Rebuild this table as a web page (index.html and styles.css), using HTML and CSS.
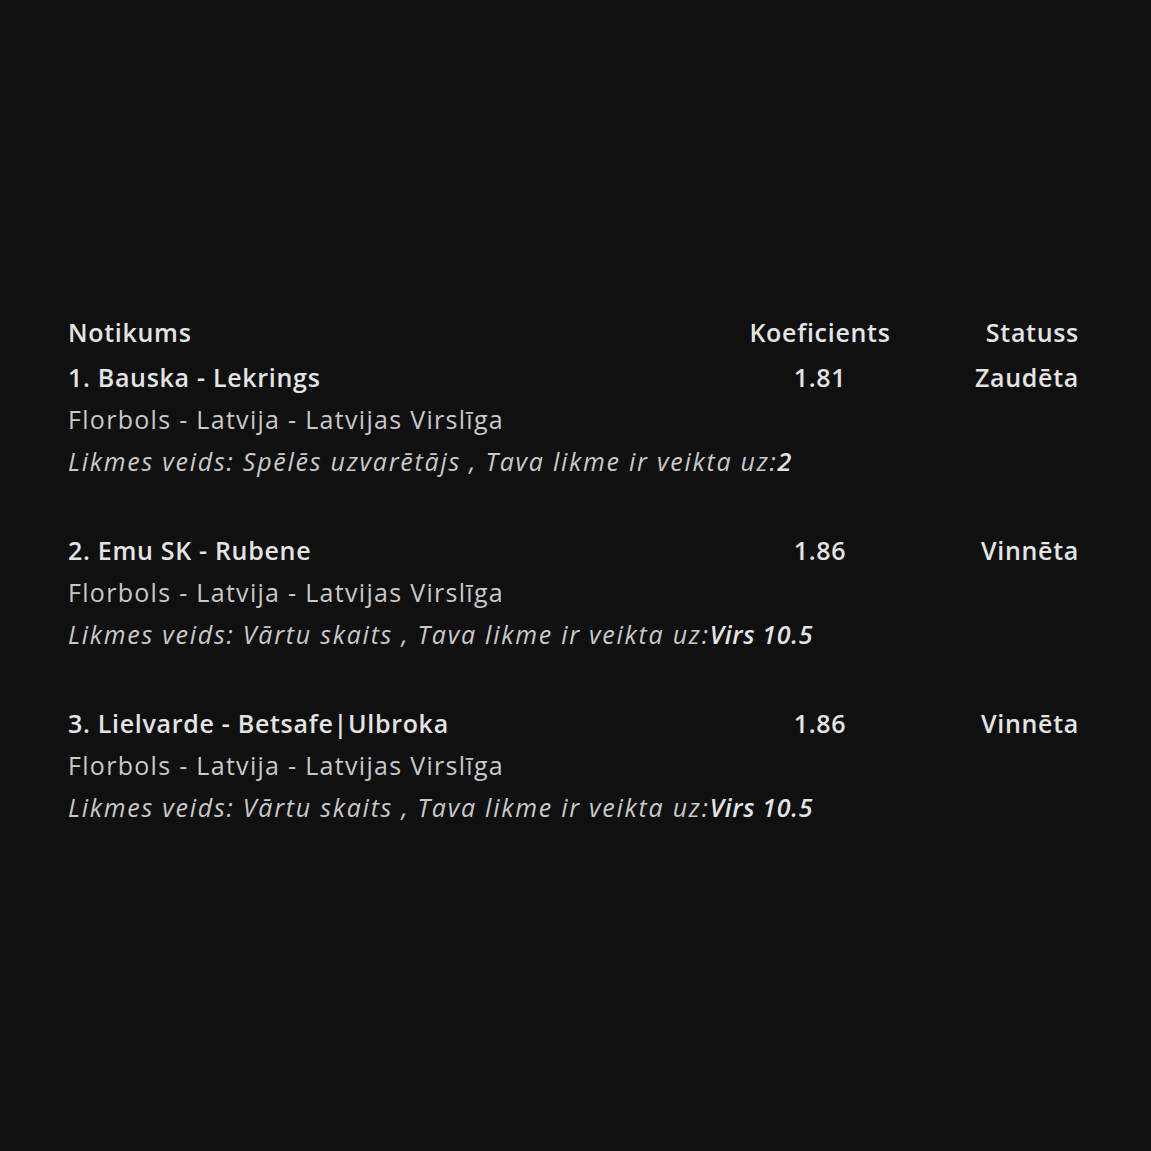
FILE: index.html
```html
<!DOCTYPE html>
<html lang="lv">
<head>
<meta charset="utf-8">
<link rel="stylesheet" href="styles.css">
</head>
<body>
<div class="page">
  <div class="table">
    <div class="row head">
      <div class="c-event">Notikums</div>
      <div class="c-odds">Koeficients</div>
      <div class="c-status">Statuss</div>
    </div>
    <div class="bet">
      <div class="row title">
        <div class="c-event">1. Bauska - Lekrings</div>
        <div class="c-odds">1.81</div>
        <div class="c-status">Zaudēta</div>
      </div>
      <div class="sub">Florbols - Latvija - Latvijas Virslīga</div>
      <div class="type">Likmes veids: Spēlēs uzvarētājs , Tava likme ir veikta uz:<b>2</b></div>
    </div>
    <div class="bet">
      <div class="row title">
        <div class="c-event">2. Emu SK - Rubene</div>
        <div class="c-odds">1.86</div>
        <div class="c-status">Vinnēta</div>
      </div>
      <div class="sub">Florbols - Latvija - Latvijas Virslīga</div>
      <div class="type">Likmes veids: Vārtu skaits , Tava likme ir veikta uz:<b>Virs 10.5</b></div>
    </div>
    <div class="bet">
      <div class="row title">
        <div class="c-event">3. Lielvarde - Betsafe|Ulbroka</div>
        <div class="c-odds">1.86</div>
        <div class="c-status">Vinnēta</div>
      </div>
      <div class="sub">Florbols - Latvija - Latvijas Virslīga</div>
      <div class="type">Likmes veids: Vārtu skaits , Tava likme ir veikta uz:<b>Virs 10.5</b></div>
    </div>
  </div>
</div>
</body>
</html>
```
FILE: styles.css
```css
html, body {
  margin: 0;
  padding: 0;
  background: #101010;
}
body {
  font-family: "Open Sans", Lato, sans-serif;
  color: #e4e4e4;
  font-size: 25px;
}
.page {
  width: 1151px;
  height: 1151px;
  box-sizing: border-box;
  padding: 311px 73px 0 68px;
}
.table {
  display: flex;
  flex-direction: column;
}
.row {
  display: grid;
  grid-template-columns: 1fr 166px 175px;
  align-items: baseline;
  line-height: 42px;
}
.head {
  font-weight: 600;
  letter-spacing: 0.7px;
  margin-bottom: 3px;
}
.title {
  font-weight: 600;
  letter-spacing: 0.7px;
}
.c-odds { text-align: center; }
.c-status { text-align: right; margin-right: -1px; }
.bet {
  margin-bottom: 47px;
}
.sub {
  color: #c9c9c9;
  line-height: 42px;
  letter-spacing: 1.3px;
}
.type {
  color: #c9c9c9;
  font-style: italic;
  line-height: 42px;
  letter-spacing: 1.75px;
}
.type b {
  color: #e4e4e4;
  font-weight: 600;
  letter-spacing: 0.7px;
}
```
